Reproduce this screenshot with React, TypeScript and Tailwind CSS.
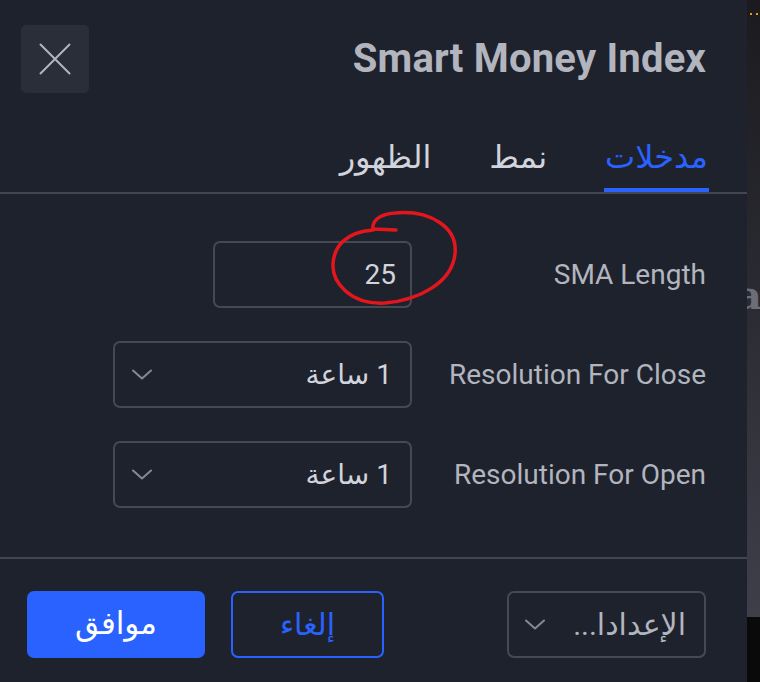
import React from 'react';

const font = "font-['Roboto','Noto_Sans','DejaVu_Sans',sans-serif]";

const Chevron: React.FC = () => (
  <svg width="20" height="11" viewBox="0 0 20 11" fill="none">
    <path d="M1 1.5 L10 9.5 L19 1.5" stroke="#868993" strokeWidth="2" strokeLinecap="round" strokeLinejoin="round" />
  </svg>
);

const Select: React.FC<{ value: string; width: string }> = ({ value, width }) => (
  <div
    className={`${width} h-[67px] flex items-center justify-between pl-[17px] pr-[18px] border-2 border-[#464953] rounded-[7px]`}
  >
    <Chevron />
    <span dir="rtl" className="text-[28px] text-[#d1d4dc] leading-none">
      {value}
    </span>
  </div>
);

export default function App() {
  const rows = [
    { label: 'Resolution For Close', value: '1 ساعة' },
    { label: 'Resolution For Open', value: '1 ساعة' },
  ];

  return (
    <div className={`w-[760px] h-[682px] flex overflow-hidden bg-[#1e222d] ${font}`}>
      {/* Dialog */}
      <div className="w-[747px] h-full flex flex-col bg-[#1e222d]">
        {/* Header */}
        <div className="flex items-center justify-between pt-[25px] pl-[21px] pr-[41px]">
          <button className="w-[68px] h-[68px] rounded-[5px] bg-[#2a2e39] flex items-center justify-center">
            <svg width="32" height="32" viewBox="0 0 32 32" fill="none">
              <path d="M1.5 1.5 L30.5 30.5 M30.5 1.5 L1.5 30.5" stroke="#b2b5be" strokeWidth="2" strokeLinecap="round" />
            </svg>
          </button>
          <h1 className="text-[40px] font-bold text-[#b2b5be] leading-none tracking-[0.2px]">
            Smart Money Index
          </h1>
        </div>

        {/* Tabs */}
        <div className="h-[101px] flex justify-end items-end gap-[56px] pr-[38px] border-b-2 border-[#434651]">
          {[
            { label: 'الظهور', active: false },
            { label: 'نمط', active: false },
            { label: 'مدخلات', active: true },
          ].map(({ label, active }) => (
            <div key={label} className="flex flex-col">
              <span
                dir="rtl"
                className={`text-[32px] leading-[40px] px-[1px] ${active ? 'text-[#2962ff]' : 'text-[#d1d4dc]'}`}
              >
                {label}
              </span>
              <div className={`mt-[11px] h-[4px] ${active ? 'bg-[#2962ff]' : 'bg-transparent'}`} />
            </div>
          ))}
        </div>

        {/* Inputs */}
        <div className="flex flex-col gap-[33px] pt-[47px] pb-[49px] pl-[113px] pr-[41px] border-b-2 border-[#434651]">
          <div className="h-[67px] flex items-center">
            <div className="w-[299px] flex justify-end">
              <div className="relative w-[199px] h-[67px] flex items-center justify-end pr-[14px] border-2 border-[#464953] rounded-[7px]">
                <span className="text-[28px] text-[#d1d4dc] leading-none">25</span>
                {/* hand-drawn annotation */}
                <svg
                  className="absolute left-[108px] top-[-36px] overflow-visible"
                  width="140"
                  height="100"
                  viewBox="0 0 140 100"
                  fill="none"
                >
                  <path
                    d="M73 23 L50 22 C49 15 55 7 72 6 C107 3 135 20 132 47 C129 75 97 93 62 96 C27 98 9 75 10 57 C11 40 22 25 50 23"
                    stroke="#e3161d"
                    strokeWidth="3.5"
                    strokeLinecap="round"
                    strokeLinejoin="round"
                  />
                </svg>
              </div>
            </div>
            <span className="flex-1 text-right text-[28px] text-[#b2b5be] leading-none">SMA Length</span>
          </div>
          {rows.map(({ label, value }) => (
            <div key={label} className="h-[67px] flex items-center">
              <Select value={value} width="w-[299px]" />
              <span className="flex-1 text-right text-[28px] text-[#b2b5be] leading-none">{label}</span>
            </div>
          ))}
        </div>

        {/* Footer */}
        <div className="flex items-start justify-between pt-[32px] pl-[27px] pr-[41px]">
          <div className="flex gap-[26px]">
            <button className="w-[178px] h-[67px] rounded-[7px] bg-[#2962ff] text-white text-[31px] font-medium flex items-center justify-center">
              <span dir="rtl">موافق</span>
            </button>
            <button className="w-[153px] h-[67px] rounded-[7px] border-2 border-[#2962ff] text-[#2962ff] text-[30px] flex items-center justify-center">
              <span dir="rtl">إلغاء</span>
            </button>
          </div>
          <div className="w-[199px] h-[67px] flex items-center justify-between pl-[16px] pr-[18px] border-2 border-[#464953] rounded-[7px]">
            <Chevron />
            <span dir="rtl" className="text-[30px] text-[#b2b5be] leading-none">
              الإعدادا...
            </span>
          </div>
        </div>
      </div>

      {/* Background strip behind the dialog */}
      <div className="w-[13px] h-full flex flex-col overflow-hidden">
        <div className="flex-1 flex flex-col bg-gradient-to-b from-[#1b1b1f] via-[#2b2c33] to-[#3e3f49]">
          <div className="flex gap-[4px] pt-[13px] pl-[3px]">
            <div className="w-[2px] h-[2px] bg-[#f7931a]" />
            <div className="w-[2px] h-[2px] bg-[#f7931a]" />
          </div>
          <div className="mt-[260px] -ml-[11px] text-[40px] font-bold leading-none text-[#6b6e78] font-['DejaVu_Serif',serif]">a</div>
        </div>
        <div className="h-[65px] bg-[#0a0a0a]" />
      </div>
    </div>
  );
}
